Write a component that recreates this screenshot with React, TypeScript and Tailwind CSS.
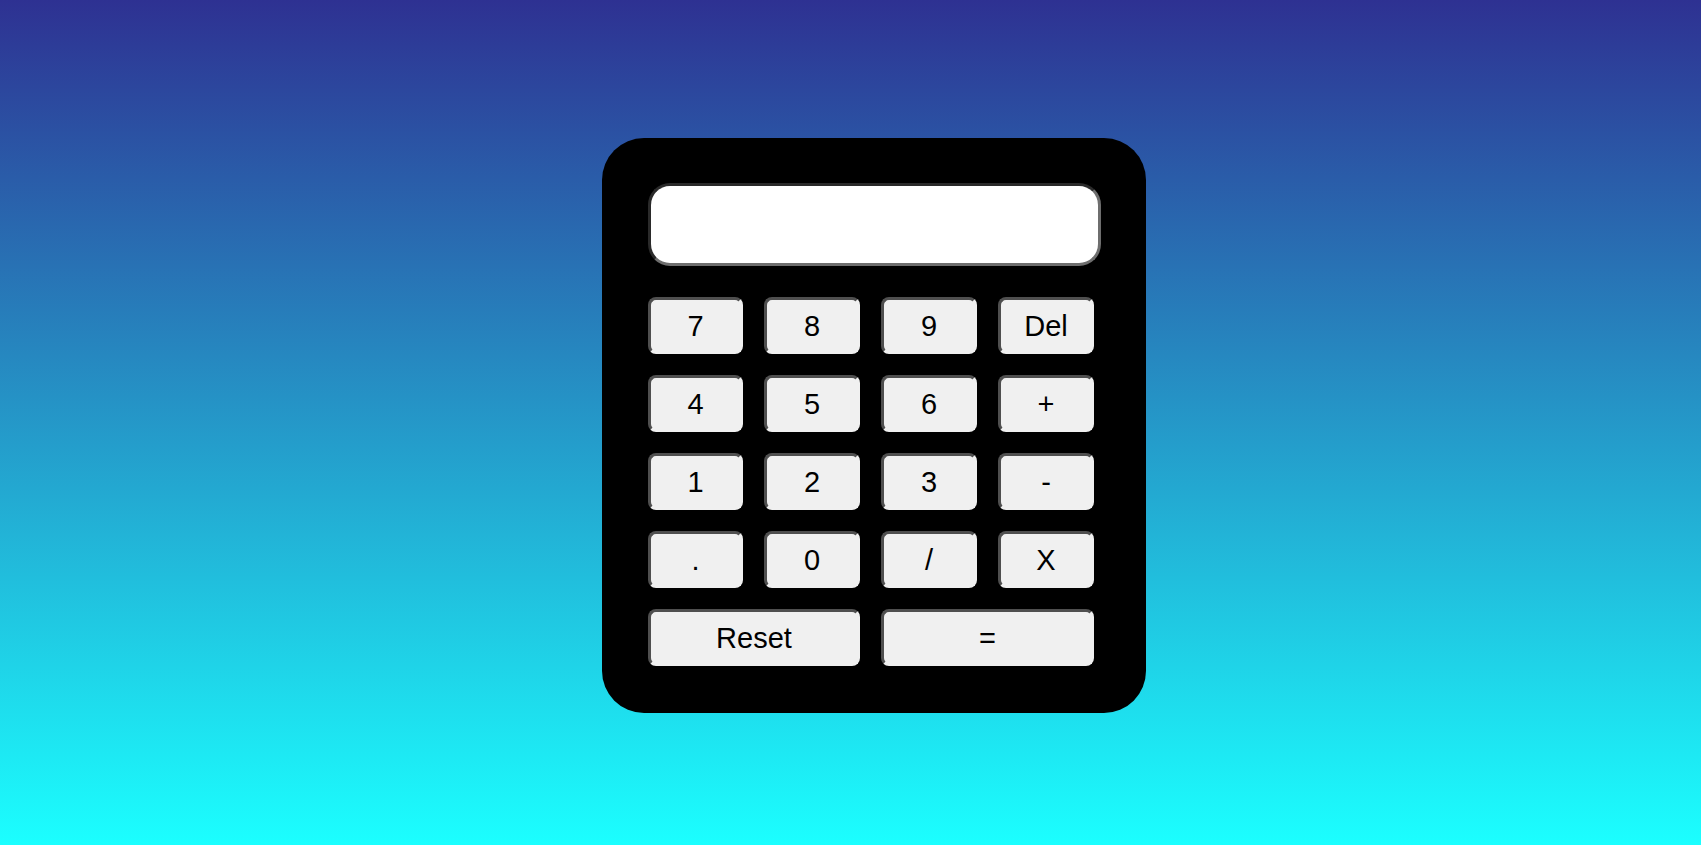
import React, { useState } from "react";

const keys = ["7", "8", "9", "Del", "4", "5", "6", "+", "1", "2", "3", "-", ".", "0", "/", "X"];

const btn =
  "h-[57px] rounded-[8px] bg-[#f0f0f0] border-[3px] border-t-[#4f4f4f] border-l-[#4f4f4f] border-b-[#f0f0f0] border-r-[#f0f0f0] text-black text-[29px] leading-none flex items-center justify-center pt-[2px]";

const App: React.FC = () => {
  const [value, setValue] = useState("");

  const handleKey = (k: string) => {
    if (k === "Del") setValue((v) => v.slice(0, -1));
    else setValue((v) => v + (k === "X" ? "*" : k));
  };

  const handleEquals = () => {
    try {
      // eslint-disable-next-line no-new-func
      setValue(String(Function(`return (${value})`)()));
    } catch {
      setValue("Error");
    }
  };

  return (
    <div
      className="min-h-[845px] w-full flex items-center justify-center pl-[47px] pt-[6px] bg-[linear-gradient(to_bottom,#2e3192,#1bffff)]"
      style={{ fontFamily: '"Liberation Sans", Arial, sans-serif' }}
    >
      <div className="w-[544px] h-[575px] bg-black rounded-[42px] pl-[46px] pr-[45px] pt-[45px]">
        <input
          value={value}
          readOnly
          className="block w-[453px] h-[83px] rounded-[22px] bg-white border-[3px] border-t-[#2a2a2a] border-l-[#2a2a2a] border-b-[#6e6e6e] border-r-[#6e6e6e] outline-none px-4 text-right text-[29px] text-black"
        />
        <div className="mt-[31px] grid grid-cols-[95px_96px_96px_96px] gap-x-[21px] gap-y-[21px]">
          {keys.map((k) => (
            <button key={k} className={btn} onClick={() => handleKey(k)}>
              {k}
            </button>
          ))}
          <button className={`${btn} col-span-2`} onClick={() => setValue("")}>
            Reset
          </button>
          <button className={`${btn} col-span-2`} onClick={handleEquals}>
            =
          </button>
        </div>
      </div>
    </div>
  );
};

export default App;
